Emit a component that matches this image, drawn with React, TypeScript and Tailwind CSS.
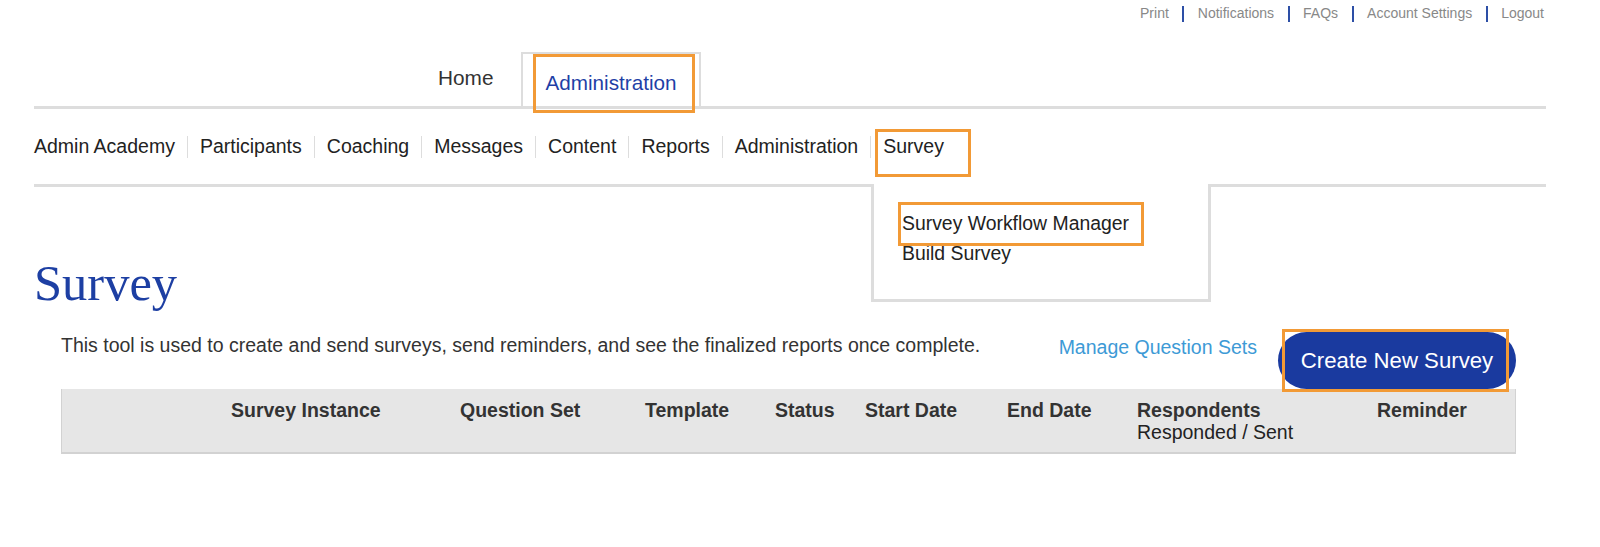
import React from "react";

const topLinks = ["Print", "Notifications", "FAQs", "Account Settings", "Logout"];
const subNav = ["Admin Academy", "Participants", "Coaching", "Messages", "Content", "Reports", "Administration", "Survey"];

export default function App() {
  return (
    <div className="relative w-full h-[547px] bg-white overflow-hidden font-['Liberation_Sans',Arial,sans-serif] text-[#333]">
      {/* top utility links */}
      <div className="h-[27px] flex justify-end items-center pr-[56px] text-[14px] text-[#888]">
        {topLinks.map((l, i) => (
          <React.Fragment key={l}>
            {i > 0 && <span className="mx-[13.5px] w-[2px] h-[16px] bg-[#2d4fa6]" />}
            <span>{l}</span>
          </React.Fragment>
        ))}
      </div>

      <div className="ml-[34px] w-[1512px]">
        {/* main tabs */}
        <div className="h-[82px] flex items-end border-b-[3px] border-[#dddddd]">
          <div className="ml-[404px] h-[54px] pb-[3px] flex items-center text-[20.8px] text-[#333]">Home</div>
          <div className="ml-[28px] h-[54px] border-t-2 border-x-2 border-[#dddddd] bg-white pl-[22px] pr-[22px] pt-[6px] flex items-center text-[20.7px] text-[#1f3fa6]">
            Administration
          </div>
        </div>

        {/* sub nav */}
        <div className="h-[78px] flex items-center border-b-[3px] border-[#dddddd] text-[19.5px] text-[#222]">
          {subNav.map((s, i) => (
            <React.Fragment key={s}>
              {i > 0 && <span className="mx-[12px] w-px h-[22px] bg-[#dddddd]" />}
              <span>{s}</span>
            </React.Fragment>
          ))}
        </div>

        {/* heading */}
        <h1 className="mt-[71px] h-[50px] leading-[50px] text-[50.5px] text-[#1d3fa3] font-['Liberation_Serif',Georgia,serif]">
          Survey
        </h1>
      </div>

      {/* description row */}
      <div className="ml-[61px] w-[1455px] mt-[24px] flex items-start">
        <p className="flex-1 pt-[2px] leading-[22px] text-[19.5px] text-[#333]">
          This tool is used to create and send surveys, send reminders, and see the finalized reports once complete.
        </p>
        <a className="pt-[4px] leading-[22px] text-[19.5px] text-[#3d9ad6]">Manage Question Sets</a>
        <button className="ml-[21px] w-[238px] h-[57px] rounded-full bg-[#1a3a9f] text-white text-[22.2px]">
          Create New Survey
        </button>
      </div>

      {/* table header */}
      <div className="ml-[61px] w-[1455px] h-[65px] bg-[#e6e6e6] border-l border-r border-b-2 border-[#d2d2d2] flex pt-[10px] text-[19.5px] leading-[22px] text-[#333]">
        <div className="w-[169px]" />
        <div className="w-[229px] font-bold">Survey Instance</div>
        <div className="w-[185px] font-bold">Question Set</div>
        <div className="w-[130px] font-bold">Template</div>
        <div className="w-[90px] font-bold">Status</div>
        <div className="w-[142px] font-bold">Start Date</div>
        <div className="w-[130px] font-bold">End Date</div>
        <div className="w-[240px]">
          <div className="font-bold">Respondents</div>
          <div className="text-[#222]">Responded / Sent</div>
        </div>
        <div className="font-bold">Reminder</div>
      </div>

      {/* dropdown menu */}
      <div className="absolute left-[871px] top-[184px] w-[340px] h-[118px] bg-white border-x-[3px] border-b-[3px] border-[#dddddd] pl-[28px] pt-[24px] text-[19.4px] leading-[30px] text-[#222]">
        <div>Survey Workflow Manager</div>
        <div>Build Survey</div>
      </div>

      {/* orange annotation boxes */}
      <div className="absolute left-[533px] top-[54px] w-[162px] h-[59px] border-[3px] border-[#f29a36]" />
      <div className="absolute left-[875px] top-[129px] w-[96px] h-[48px] border-[3px] border-[#f29a36]" />
      <div className="absolute left-[898px] top-[202px] w-[246px] h-[44px] border-[3px] border-[#f29a36]" />
      <div className="absolute left-[1282px] top-[329px] w-[227px] h-[63px] border-[3px] border-[#f29a36]" />
    </div>
  );
}
